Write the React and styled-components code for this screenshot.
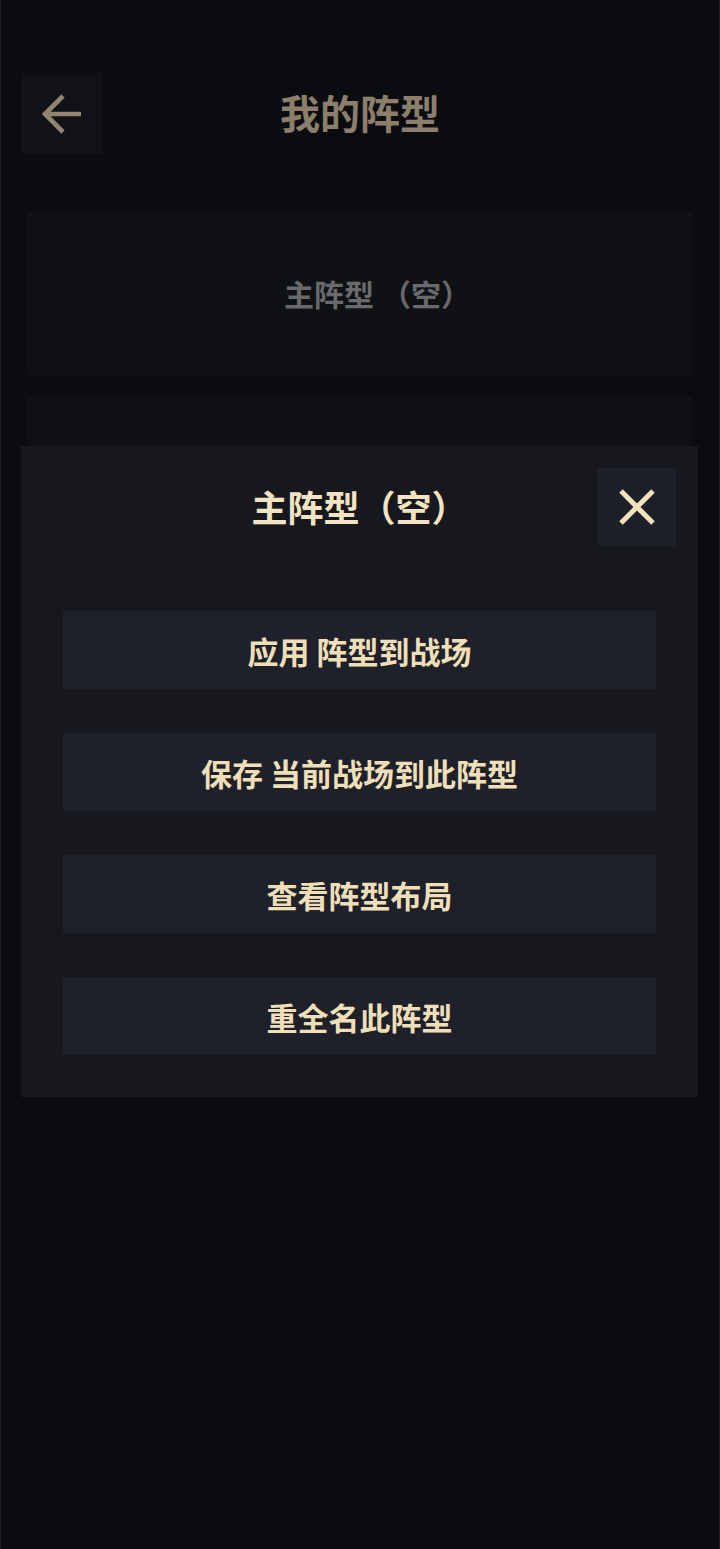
import React from "react";
import styled, { createGlobalStyle } from "styled-components";

const Global = createGlobalStyle`
  html, body { margin: 0; padding: 0; background: #0b0c10; }
  body { font-family: "Noto Sans CJK SC", "Noto Sans", sans-serif; }
  * { box-sizing: border-box; }
`;

const Page = styled.div`
  position: relative;
  width: 720px;
  min-height: 1549px;
  background: #0b0c10;
  border-left: 1px solid #1c1d22;
  border-right: 1px solid #1c1d22;
`;

const Header = styled.header`
  display: grid;
  grid-template-columns: 81px 1fr 81px;
  align-items: center;
  padding: 73px 20px 0 20px;
`;

const BackButton = styled.button`
  width: 81px;
  height: 81px;
  border: none;
  background: #111217;
  display: flex;
  align-items: center;
  justify-content: center;
  padding: 0;
`;

const Title = styled.h1`
  margin: 0 0 3px 0;
  text-align: center;
  font-size: 40px;
  line-height: 1.2;
  font-weight: 700;
  color: #8b7f6b;
`;

const List = styled.div`
  display: flex;
  flex-direction: column;
  gap: 22px;
  padding: 57px 27px 0 26px;
`;

const Card = styled.div`
  height: 164px;
  background: #0f1115;
  display: flex;
  align-items: center;
  justify-content: center;
  padding-left: 36px;
  font-size: 30px;
  font-weight: 700;
  color: #6a6a6c;
`;

const Backdrop = styled.div`
  position: absolute;
  inset: 0;
`;

const Modal = styled.div`
  position: absolute;
  left: 20px;
  top: 446px;
  width: 677px;
  background: #17181d;
  padding: 22px 42px 42px 42px;
  display: flex;
  flex-direction: column;
`;

const ModalHead = styled.div`
  display: grid;
  grid-template-columns: 78px 1fr 78px;
  align-items: center;
  margin: 0 -20px 0 -20px;
`;

const ModalTitle = styled.h2`
  grid-column: 2;
  margin: 0;
  text-align: center;
  font-size: 36px;
  line-height: 1.2;
  font-weight: 700;
  color: #f2e3c2;
`;

const CloseButton = styled.button`
  grid-column: 3;
  width: 78px;
  height: 78px;
  border: none;
  padding: 0;
  background: #1e2029;
  display: flex;
  align-items: center;
  justify-content: center;
`;

const Actions = styled.div`
  display: flex;
  flex-direction: column;
  gap: 44px;
  margin-top: 65px;
`;

const Action = styled.button`
  height: 78px;
  border: none;
  background: #1f212a;
  color: #eedfb9;
  font-family: "Noto Sans CJK SC", "Noto Sans", sans-serif;
  font-size: 31px;
  font-weight: 700;
  display: flex;
  align-items: center;
  justify-content: center;
  padding: 0;
`;

const ArrowIcon = () => (
  <svg width="40" height="40" viewBox="0 0 40 40" fill="none">
    <path
      d="M21 2 L3 20 L21 38 M3 20 H39"
      stroke="#918571"
      strokeWidth="4.6"
      strokeLinecap="butt"
      strokeLinejoin="miter"
    />
  </svg>
);

const CloseIcon = () => (
  <svg width="36" height="36" viewBox="0 0 36 36" fill="none">
    <path d="M2 2 L34 34 M34 2 L2 34" stroke="#f1e2bb" strokeWidth="5" />
  </svg>
);

const actions = [
  "应用 阵型到战场",
  "保存 当前战场到此阵型",
  "查看阵型布局",
  "重全名此阵型",
];

export default function App() {
  return (
    <>
      <Global />
      <Page>
        <Header>
          <BackButton aria-label="返回">
            <ArrowIcon />
          </BackButton>
          <Title>我的阵型</Title>
          <span />
        </Header>
        <List>
          <Card>主阵型 （空）</Card>
          <Card />
          <Card />
        </List>
        <Backdrop />
        <Modal>
          <ModalHead>
            <ModalTitle>主阵型（空）</ModalTitle>
            <CloseButton aria-label="关闭">
              <CloseIcon />
            </CloseButton>
          </ModalHead>
          <Actions>
            {actions.map((a) => (
              <Action key={a}>{a}</Action>
            ))}
          </Actions>
        </Modal>
      </Page>
    </>
  );
}
